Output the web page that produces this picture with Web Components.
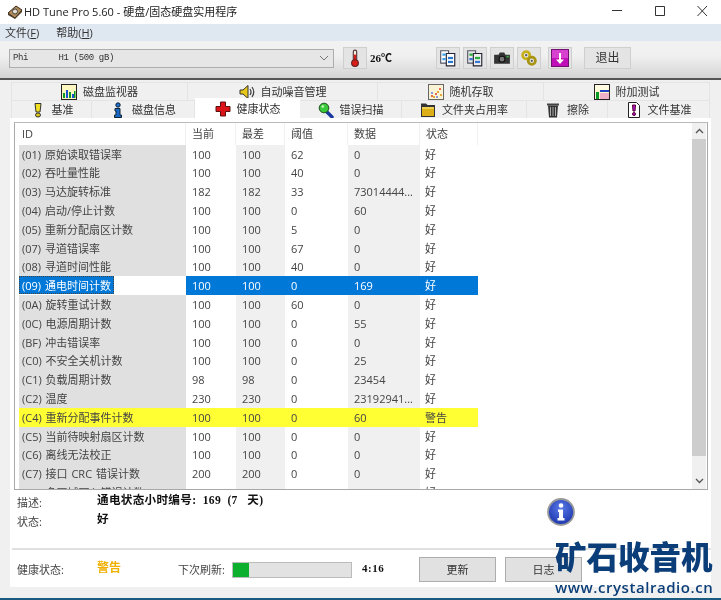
<!DOCTYPE html>
<html lang="zh">
<head>
<meta charset="utf-8">
<title>HD Tune Pro 5.60</title>
<style>
    html, body { margin:0; padding:0; background:#f0f0f0; }
    body { font:11px/16px "Open Sans","Noto Sans CJK SC",sans-serif; color:#333; }
    hd-app { filter:blur(.3px); }
</style>
</head>
<body>
<hd-app>
    <hd-titlebar slot="top">HD Tune Pro 5.60 - 硬盘/固态硬盘实用程序</hd-titlebar>
    <hd-menu slot="top"></hd-menu>
    <hd-toolbar slot="top"></hd-toolbar>
    <hd-tabs slot="top"></hd-tabs>
    <hd-panel>
        <smart-table></smart-table>
        <hd-details></hd-details>
        <hd-status></hd-status>
    </hd-panel>
    <hd-watermark slot="over"></hd-watermark>
</hd-app>

<script>
// all icons in one place, viewBox is 16x16 unless the name says otherwise
const ICONS = {
    drive: `<path d="M1 9 9 2l6 4-7 8z" fill="#b08a58" stroke="#3a2c1a"/><circle cx="8" cy="7.500" r="2.500" fill="#e8e0d0" stroke="#444"/><path d="M1 9v2l7 4 7-7V6l-7 8z" fill="#4a3a28"/>`,
    monitor: `<rect x=".5" y=".5" width="15" height="15" fill="#fdf6c0" stroke="#222"/><rect x="2" y="9" width="2" height="5" fill="#0a9a2a"/><rect x="5" y="6" width="2" height="8" fill="#1c50d0"/><rect x="8" y="8" width="2" height="6" fill="#0a9a2a"/><rect x="11" y="10" width="2" height="4" fill="#1c50d0"/><rect x="13" y="7" width="1.500" height="7" fill="#0a9a2a"/>`,
    speaker: `<path d="M1 6h3l5-4.500v13L4 10H1z" fill="#e8c818" stroke="#333"/><path d="M11 5q2 3 0 6M13 3q3.500 5 0 10" fill="none" stroke="#444" stroke-width="1.300"/>`,
    random: `<rect x=".5" y=".5" width="15" height="15" fill="#fbf3d6" stroke="#666"/><g fill="#e86a50"><rect x="3" y="11" width="2" height="2"/><rect x="7" y="9" width="2" height="2"/><rect x="11" y="4" width="2" height="2"/></g><g fill="#e8a840"><rect x="5" y="12" width="2" height="2"/><rect x="9" y="7" width="2" height="2"/><rect x="12" y="10" width="2" height="2"/></g><g fill="#8a9ae8"><rect x="3" y="8" width="2" height="2"/><rect x="8" y="12" width="2" height="2"/></g>`,
    extra: `<rect x=".5" y=".5" width="15" height="15" fill="#fff8d0" stroke="#222"/><rect x="1" y="1" width="14" height="5" fill="#fffbe0"/><rect x="2" y="8" width="3" height="7" fill="#0a9a2a"/><rect x="6" y="6" width="9" height="2" fill="#1c40c0"/><rect x="6" y="9" width="9" height="6" fill="#eeb0c8"/>`,
    hint: `<path d="M5 1.500h6l-1 8.500H6z" fill="#f2e020" stroke="#333"/><ellipse cx="8" cy="13" rx="2.500" ry="2" fill="#e0c818" stroke="#333"/>`,
    info: `<circle cx="8" cy="3" r="2.200" fill="#1c70d0" stroke="#123"/><path d="M5 6.500h5V13h1.500v2.500h-7V13H6V9H5z" fill="#1868c8" stroke="#123"/>`,
    cross: `<path d="M5.500 1h5v4.500H15v5h-4.500V15h-5v-4.500H1v-5h4.500z" fill="#dc1418" stroke="#5a1010"/>`,
    lens: `<path d="m9 10 5 5" stroke="#1838a0" stroke-width="3.400" stroke-linecap="round"/><circle cx="6" cy="6" r="4.800" fill="#38c838" stroke="#205020"/><circle cx="4.800" cy="4.500" r="1.300" fill="#c8f8c0"/>`,
    folder: `<path d="M1 1.500h5l1.500 1.500h7.500v12H1z" fill="#333"/><path d="M2 5h12v9H2z" fill="#dcae18"/><path d="M2 5h12v2H2z" fill="#f0d050"/>`,
    trash: `<path d="M2 1.500h12v2H2z" fill="#444"/><path d="M3 3.500h10l-1 12H4z" fill="#333"/><path d="M5.500 5v9M8 5v9M10.500 5v9" stroke="#aaa"/>`,
    filebench: `<path d="M2.500.500h8l3 3v12h-11z" fill="#fff" stroke="#222"/><path d="M6.500 3h3L9 9H7z" fill="#b018c0" stroke="#503"/><circle cx="8" cy="12" r="1.500" fill="#b018c0" stroke="#503"/>`,
    thermo: `<rect x="6.500" y="1" width="3" height="10" rx="1.500" fill="#f4f0e8" stroke="#533"/><rect x="7" y="5" width="2" height="6" fill="#d81c18"/><circle cx="8" cy="12.500" r="3" fill="#d81c18" stroke="#622"/>`,
    docBlue: `<path d="M1.500 1.500h7v11h-7z" fill="#fff" stroke="#556"/><path d="M6.500 4h7.500v11H6.500z" fill="#fff" stroke="#223"/><rect x="3" y="4" width="3" height="2" fill="#40a0e8"/><rect x="3" y="8" width="3" height="2" fill="#40a0e8"/><rect x="8" y="7" width="4.500" height="2" fill="#2878d0"/><rect x="8" y="10.500" width="4.500" height="2" fill="#2878d0"/>`,
    docGreen: `<path d="M1.500 1.500h7v11h-7z" fill="#e8e8e8" stroke="#556"/><path d="M6.500 4h7.500v11H6.500z" fill="#eee" stroke="#223"/><rect x="3" y="4" width="3" height="2" fill="#28b038"/><rect x="3" y="8" width="3" height="2" fill="#3878d0"/><rect x="8" y="7" width="4.500" height="2" fill="#28b038"/><rect x="8" y="10.500" width="4.500" height="2" fill="#3878d0"/>`,
    camera: `<path d="M1 5h4l1-2h4l1 2h4v8H1z" fill="#333"/><circle cx="8" cy="9" r="2.600" fill="#777" stroke="#111"/><rect x="12" y="6" width="2" height="1.500" fill="#3ab040"/>`,
    gears: `<circle cx="5.500" cy="5.500" r="3.200" fill="none" stroke="#c8b018" stroke-width="2.400"/><circle cx="10.500" cy="10.500" r="3.200" fill="none" stroke="#a89410" stroke-width="2.400"/><circle cx="5.500" cy="5.500" r="1" fill="#555"/><circle cx="10.500" cy="10.500" r="1" fill="#555"/>`,
    down: `<rect x=".5" y=".5" width="17" height="17" fill="#c010b8" stroke="#701070"/><rect x="1" y="1" width="16" height="8" fill="#d840d0"/><path d="M8 4h2v6.500h3L9 15l-4-4.500h3z" fill="#fff"/>`
};

class HdIcon extends HTMLElement {
    connectedCallback() {
        const size = this.getAttribute('size') || 16;
        const box = this.getAttribute('box') || 16;
        this.attachShadow({mode:'open'}).innerHTML = `
            <style>:host { display:inline-flex; flex:none; } svg { display:block; }</style>
            <svg width="${size}" height="${size}" viewBox="0 0 ${box} ${box}">${ICONS[this.getAttribute('name')] || ''}</svg>`;
    }
}

class HdApp extends HTMLElement {
    constructor() {
        super();
        this.attachShadow({mode:'open'}).innerHTML = `
            <style>
                :host { display:flex; flex-direction:column; position:relative; width:721px; height:600px; overflow:hidden; background:#f0f0f0; }
                .edge { height:2px; background:#1b5a80; margin-top:auto; flex:none; }
            </style>
            <slot name="top"></slot>
            <slot></slot>
            <div class="edge"></div>
            <slot name="over"></slot>`;
    }
}

class HdTitlebar extends HTMLElement {
    constructor() {
        super();
        this.attachShadow({mode:'open'}).innerHTML = `
            <style>
                :host { display:flex; align-items:center; height:24px; background:#fff; padding-left:7px; font-size:11px; color:#222; flex:none; }
                span { margin-left:1px; }
                .ctl { margin-left:auto; display:flex; margin-top:-3px; }
                svg { display:block; }
            </style>
            <hd-icon name="drive"></hd-icon>
            <span><slot></slot></span>
            <div class="ctl">
                <svg width="95" height="12" viewBox="0 0 95 12" fill="none" stroke="#333">
                    <path d="M0 5.500h10M43.500 1.500h9v9h-9zM85.500 1l9.500 10M95 1l-9.500 10"/>
                </svg>
                <div style="width:14px"></div>
            </div>`;
    }
}

class HdMenu extends HTMLElement {
    constructor() {
        super();
        this.attachShadow({mode:'open'}).innerHTML = `
            <style>
                :host { display:flex; gap:17px; height:17px; background:#dfe7f0; padding-left:5px; align-items:center; color:#333; flex:none; }
                u { text-underline-offset:1px; }
            </style>
            <span>文件(<u>F</u>)</span><span>帮助(<u>H</u>)</span>`;
    }
}

class HdToolButton extends HTMLElement {
    constructor() {
        super();
        this.attachShadow({mode:'open'}).innerHTML = `
            <style>
                :host { display:flex; align-items:center; justify-content:center; box-sizing:border-box; width:24px; height:22px; background:#e4e4e4; border:1px solid #cfcfcf; flex:none; color:#333; font-size:12px; }
            </style>
            <slot></slot>`;
    }
}

class HdToolbar extends HTMLElement {
    constructor() {
        super();
        this.attachShadow({mode:'open'}).innerHTML = `
            <style>
                :host { display:flex; align-items:center; box-sizing:border-box; height:39px; padding:0 0 3px 9px; flex:none;
                        background:linear-gradient(#f2f2f2,#f0f0f0 40%,#d4d4d4); border-bottom:2px solid #555; }
                .combo { display:flex; align-items:center; justify-content:space-between; box-sizing:border-box; width:325px; height:19px; padding:0 4px 0 3px;
                         background:#e6e6e6; border:1px solid #adadad; font:9px/16px "Liberation Mono","Noto Sans CJK SC",monospace; letter-spacing:-.35px; color:#333; white-space:pre; }
                .temp { font:bold 11px/16px "Liberation Serif","Noto Sans CJK SC",serif; color:#111; margin-left:3px; width:66px; }
                .gap7 { margin-left:3px; }
                hd-tool-button.first { margin-left:9px; }
                hd-tool-button.wide { width:47px; margin-left:12px; }
            </style>
            <div class="combo"><span>Phi      H1 (500 gB)</span>
                <svg width="10" height="6" viewBox="0 0 10 6" fill="none" stroke="#777"><path d="m1 1 4 4 4-4"/></svg>
            </div>
            <hd-tool-button class="first"><hd-icon name="thermo" size="18"></hd-icon></hd-tool-button>
            <span class="temp">26℃</span>
            <hd-tool-button><hd-icon name="docBlue" size="18"></hd-icon></hd-tool-button>
            <hd-tool-button class="gap7"><hd-icon name="docGreen" size="18"></hd-icon></hd-tool-button>
            <hd-tool-button class="gap7"><hd-icon name="camera" size="18"></hd-icon></hd-tool-button>
            <hd-tool-button class="gap7"><hd-icon name="gears" size="18"></hd-icon></hd-tool-button>
            <hd-tool-button style="margin-left:7px"><hd-icon name="down" box="18" size="18"></hd-icon></hd-tool-button>
            <hd-tool-button class="wide">退出</hd-tool-button>`;
    }
}

class HdTab extends HTMLElement {
    connectedCallback() {
        this.attachShadow({mode:'open'}).innerHTML = `
            <style>
                :host { display:flex; align-items:center; justify-content:center; gap:6px; box-sizing:border-box; height:18px; flex:none; background:#f0f0f0; border:1px solid #e4e4e4; border-bottom:0; border-left:0; color:#333; }
                :host([first]) { border-left:1px solid #e4e4e4; }
                :host([active]) { background:#fff; height:21px; margin-top:-2px; z-index:1; border:0; }
            </style>
            <hd-icon name="${this.getAttribute('icon')}"></hd-icon><span>${this.getAttribute('label')}</span>`;
        this.style.width = this.getAttribute('w') + 'px';
    }
}

class HdTabs extends HTMLElement {
    constructor() {
        super();
        const tab = (w, icon, label, extra = '') => `<hd-tab w="${w}" icon="${icon}" label="${label}" ${extra}></hd-tab>`;
        this.attachShadow({mode:'open'}).innerHTML = `
            <style>
                :host { display:block; padding:2px 0 0 11px; flex:none; }
                .row { display:flex; align-items:flex-start; height:18px; }
            </style>
            <div class="row">
                ${tab(177,'monitor','磁盘监视器','first')}${tab(190,'speaker','自动噪音管理')}${tab(166,'random','随机存取')}${tab(166,'extra','附加测试')}
            </div>
            <div class="row">
                ${tab(81,'hint','基准','first')}${tab(103,'info','磁盘信息')}${tab(105,'cross','健康状态','active')}${tab(102,'lens','错误扫描')}${tab(125,'folder','文件夹占用率')}${tab(81,'trash','擦除')}${tab(102,'filebench','文件基准')}
            </div>`;
    }
}

class HdPanel extends HTMLElement {
    constructor() {
        super();
        this.attachShadow({mode:'open'}).innerHTML = `
            <style>
                :host { display:flex; flex-direction:column; box-sizing:border-box; width:701px; height:469px; margin:0 0 0 10px; padding:4px 3px 0 4px; background:#fff; flex:none; position:relative; }
            </style>
            <slot></slot>`;
    }
}

const SMART_ROWS = [
    ['(01) 原始读取错误率','100','100','62','0','好'],
    ['(02) 吞吐量性能','100','100','40','0','好'],
    ['(03) 马达旋转标准','182','182','33','73014444...','好'],
    ['(04) 启动/停止计数','100','100','0','60','好'],
    ['(05) 重新分配扇区计数','100','100','5','0','好'],
    ['(07) 寻道错误率','100','100','67','0','好'],
    ['(08) 寻道时间性能','100','100','40','0','好'],
    ['(09) 通电时间计数','100','100','0','169','好','sel'],
    ['(0A) 旋转重试计数','100','100','60','0','好'],
    ['(0C) 电源周期计数','100','100','0','55','好'],
    ['(BF) 冲击错误率','100','100','0','0','好'],
    ['(C0) 不安全关机计数','100','100','0','25','好'],
    ['(C1) 负载周期计数','98','98','0','23454','好'],
    ['(C2) 温度','230','230','0','23192941...','好'],
    ['(C4) 重新分配事件计数','100','100','0','60','警告','warn'],
    ['(C5) 当前待映射扇区计数','100','100','0','0','好'],
    ['(C6) 离线无法校正','100','100','0','0','好'],
    ['(C7) 接口 CRC 错误计数','200','200','0','0','好'],
    ['(C8) 多区域写入错误计数','100','100','0','0','好']
];

class SmartTable extends HTMLElement {
    constructor() {
        super();
        const rows = SMART_ROWS.map(r => {
            const [id, cur, worst, thr, data, state, kind = ''] = r;
            return `<div class="row ${kind}"><div class="id"><span>${id}</span></div><div>${cur}</div><div class="alt">${worst}</div><div>${thr}</div><div class="alt">${data}</div><div class="st">${state}</div></div>`;
        }).join('');
        this.attachShadow({mode:'open'}).innerHTML = `
            <style>
                :host { display:flex; box-sizing:border-box; width:694px; height:368px; border:1px solid #a8a8a8; border-top-color:#bbb; overflow:hidden; flex:none; background:#fff; color:#444; }
                .list { flex:1; padding-left:4px; overflow:hidden; }
                .head, .row { display:grid; grid-template-columns:167px 50px 49px 63px 72px 58px; width:459px; }
                .head { height:21.700px; line-height:21px; }
                .head div { padding-left:6px; border-right:1px solid #f0f0f0; box-sizing:border-box; }
                .head div:first-child { padding-left:3px; }
                .row { height:18.800px; line-height:20px; }
                .row > div { padding-left:6px; white-space:nowrap; overflow:hidden; }
                .row .id { padding-left:3px; background:#e0e0e0; word-spacing:1px; }
                .row .alt { background:#f0f0f0; }
                .row .st { padding-left:5px; }
                .row.sel { background:#0078d7; color:#fff; }
                .row.sel > div { background:none; }
                .row.sel .id { background:#fff; padding:0; }
                .row.sel .id span { display:inline-block; height:18px; line-height:19px; padding:0 3px 0 3px; background:#0078d7; outline:1px dotted #444; outline-offset:-1px; }
                .row.warn, .row.warn > div { background:#ffff33; }
                .bar { flex:none; width:14px; margin-right:1px; display:flex; flex-direction:column; background:#f0f0f0; }
                .btn { height:16px; display:flex; align-items:center; justify-content:center; flex:none; }
                .thumb { height:317px; background:#cdcdcd; flex:none; }
                .rest { flex:1; }
            </style>
            <div class="list">
                <div class="head"><div>ID</div><div>当前</div><div>最差</div><div>阈值</div><div>数据</div><div>状态</div></div>
                ${rows}
            </div>
            <div class="bar">
                <div class="btn"><svg width="9" height="6" viewBox="0 0 9 6" fill="none" stroke="#555" stroke-width="1.300"><path d="m1 5 3.500-3.500L8 5"/></svg></div>
                <div class="thumb"></div>
                <div class="rest"></div>
                <div class="btn"><svg width="9" height="6" viewBox="0 0 9 6" fill="none" stroke="#555" stroke-width="1.300"><path d="m1 1 3.500 3.500L8 1"/></svg></div>
            </div>`;
    }
}

class HdDetails extends HTMLElement {
    constructor() {
        super();
        this.attachShadow({mode:'open'}).innerHTML = `
            <style>
                :host { display:grid; grid-template-columns:80px 1fr; grid-template-rows:19px 19px; align-content:start; position:relative; box-sizing:border-box; height:58px; padding:2px 0 0 3px; flex:none; color:#444; }
                .label { padding-top:3px; }
                .val { font:bold 11.600px/18px "Liberation Serif","Noto Sans CJK SC",serif; letter-spacing:.3px; color:#111; white-space:pre; }
                .sign { position:absolute; left:533px; top:8px; }
                svg { display:block; }
            </style>
            <div class="label">描述:</div><div class="val">通电状态小时编号:  169  (7   天)</div>
            <div class="label">状态:</div><div class="val">好</div>
            <svg class="sign" width="28" height="28" viewBox="0 0 28 28">
                <defs><radialGradient id="b" cx=".5" cy=".35" r=".7"><stop offset="0" stop-color="#5a7ae8"/><stop offset="1" stop-color="#1830a8"/></radialGradient></defs>
                <circle cx="14" cy="14" r="13" fill="url(#b)" stroke="#9a9a9a" stroke-width="1.800"/>
                <circle cx="14" cy="7.500" r="2.300" fill="#fff"/>
                <path d="M11 11.500h5V20h1.500v2.500h-7V20H12v-6h-1z" fill="#fff"/>
            </svg>`;
    }
}

class HdStatus extends HTMLElement {
    constructor() {
        super();
        this.attachShadow({mode:'open'}).innerHTML = `
            <style>
                :host { display:flex; align-items:center; box-sizing:border-box; height:39px; margin-left:-2px; margin-right:-3px; padding:0 0 1px 5px; border-top:2px solid #e0e0e0; flex:none; color:#444; position:relative; }
                .lbl { width:80px; padding-top:3px; }
                .warn { width:81px; font-size:12px; font-weight:bold; color:#f0b000; font-family:"Noto Sans CJK SC",sans-serif; margin-top:-3px; }
                .next { width:54px; padding-top:3px; }
                .prog { width:120px; height:16px; box-sizing:border-box; background:#e2e2e2; border:1px solid #bcbcbc; margin-top:3px; }
                .prog div { width:16px; height:100%; background:#0cb02c; }
                .time { width:67px; padding-left:10px; box-sizing:border-box; font:bold 11px/16px "Liberation Serif",serif; letter-spacing:.5px; color:#111; margin-top:-1px; }
                button { width:77px; height:25px; margin-top:3px; box-sizing:border-box; background:#e1e1e1; border:1px solid #adadad; font:inherit; color:#333; padding:0; }
                button + button { margin-left:9px; }
            </style>
            <span class="lbl">健康状态:</span>
            <span class="warn">警告</span>
            <span class="next">下次刷新:</span>
            <div class="prog"><div></div></div>
            <span class="time">4:16</span>
            <button>更新</button><button>日志</button>`;
    }
}

class HdWatermark extends HTMLElement {
    constructor() {
        super();
        this.attachShadow({mode:'open'}).innerHTML = `
            <style>
                :host { position:absolute; left:555px; top:533px; width:166px; color:#0b3e78; }
                .cn { font:900 31.500px/44px "Noto Sans CJK SC",sans-serif; white-space:nowrap; }
                .url { font:600 15px/18px "Open Sans",sans-serif; letter-spacing:.55px; white-space:nowrap; margin-top:1px; }
            </style>
            <div class="cn">矿石收音机</div>
            <div class="url">www.crystalradio.cn</div>`;
    }
}

customElements.define('hd-icon', HdIcon);
customElements.define('hd-app', HdApp);
customElements.define('hd-titlebar', HdTitlebar);
customElements.define('hd-menu', HdMenu);
customElements.define('hd-tool-button', HdToolButton);
customElements.define('hd-toolbar', HdToolbar);
customElements.define('hd-tab', HdTab);
customElements.define('hd-tabs', HdTabs);
customElements.define('hd-panel', HdPanel);
customElements.define('smart-table', SmartTable);
customElements.define('hd-details', HdDetails);
customElements.define('hd-status', HdStatus);
customElements.define('hd-watermark', HdWatermark);
</script>
</body>
</html>
